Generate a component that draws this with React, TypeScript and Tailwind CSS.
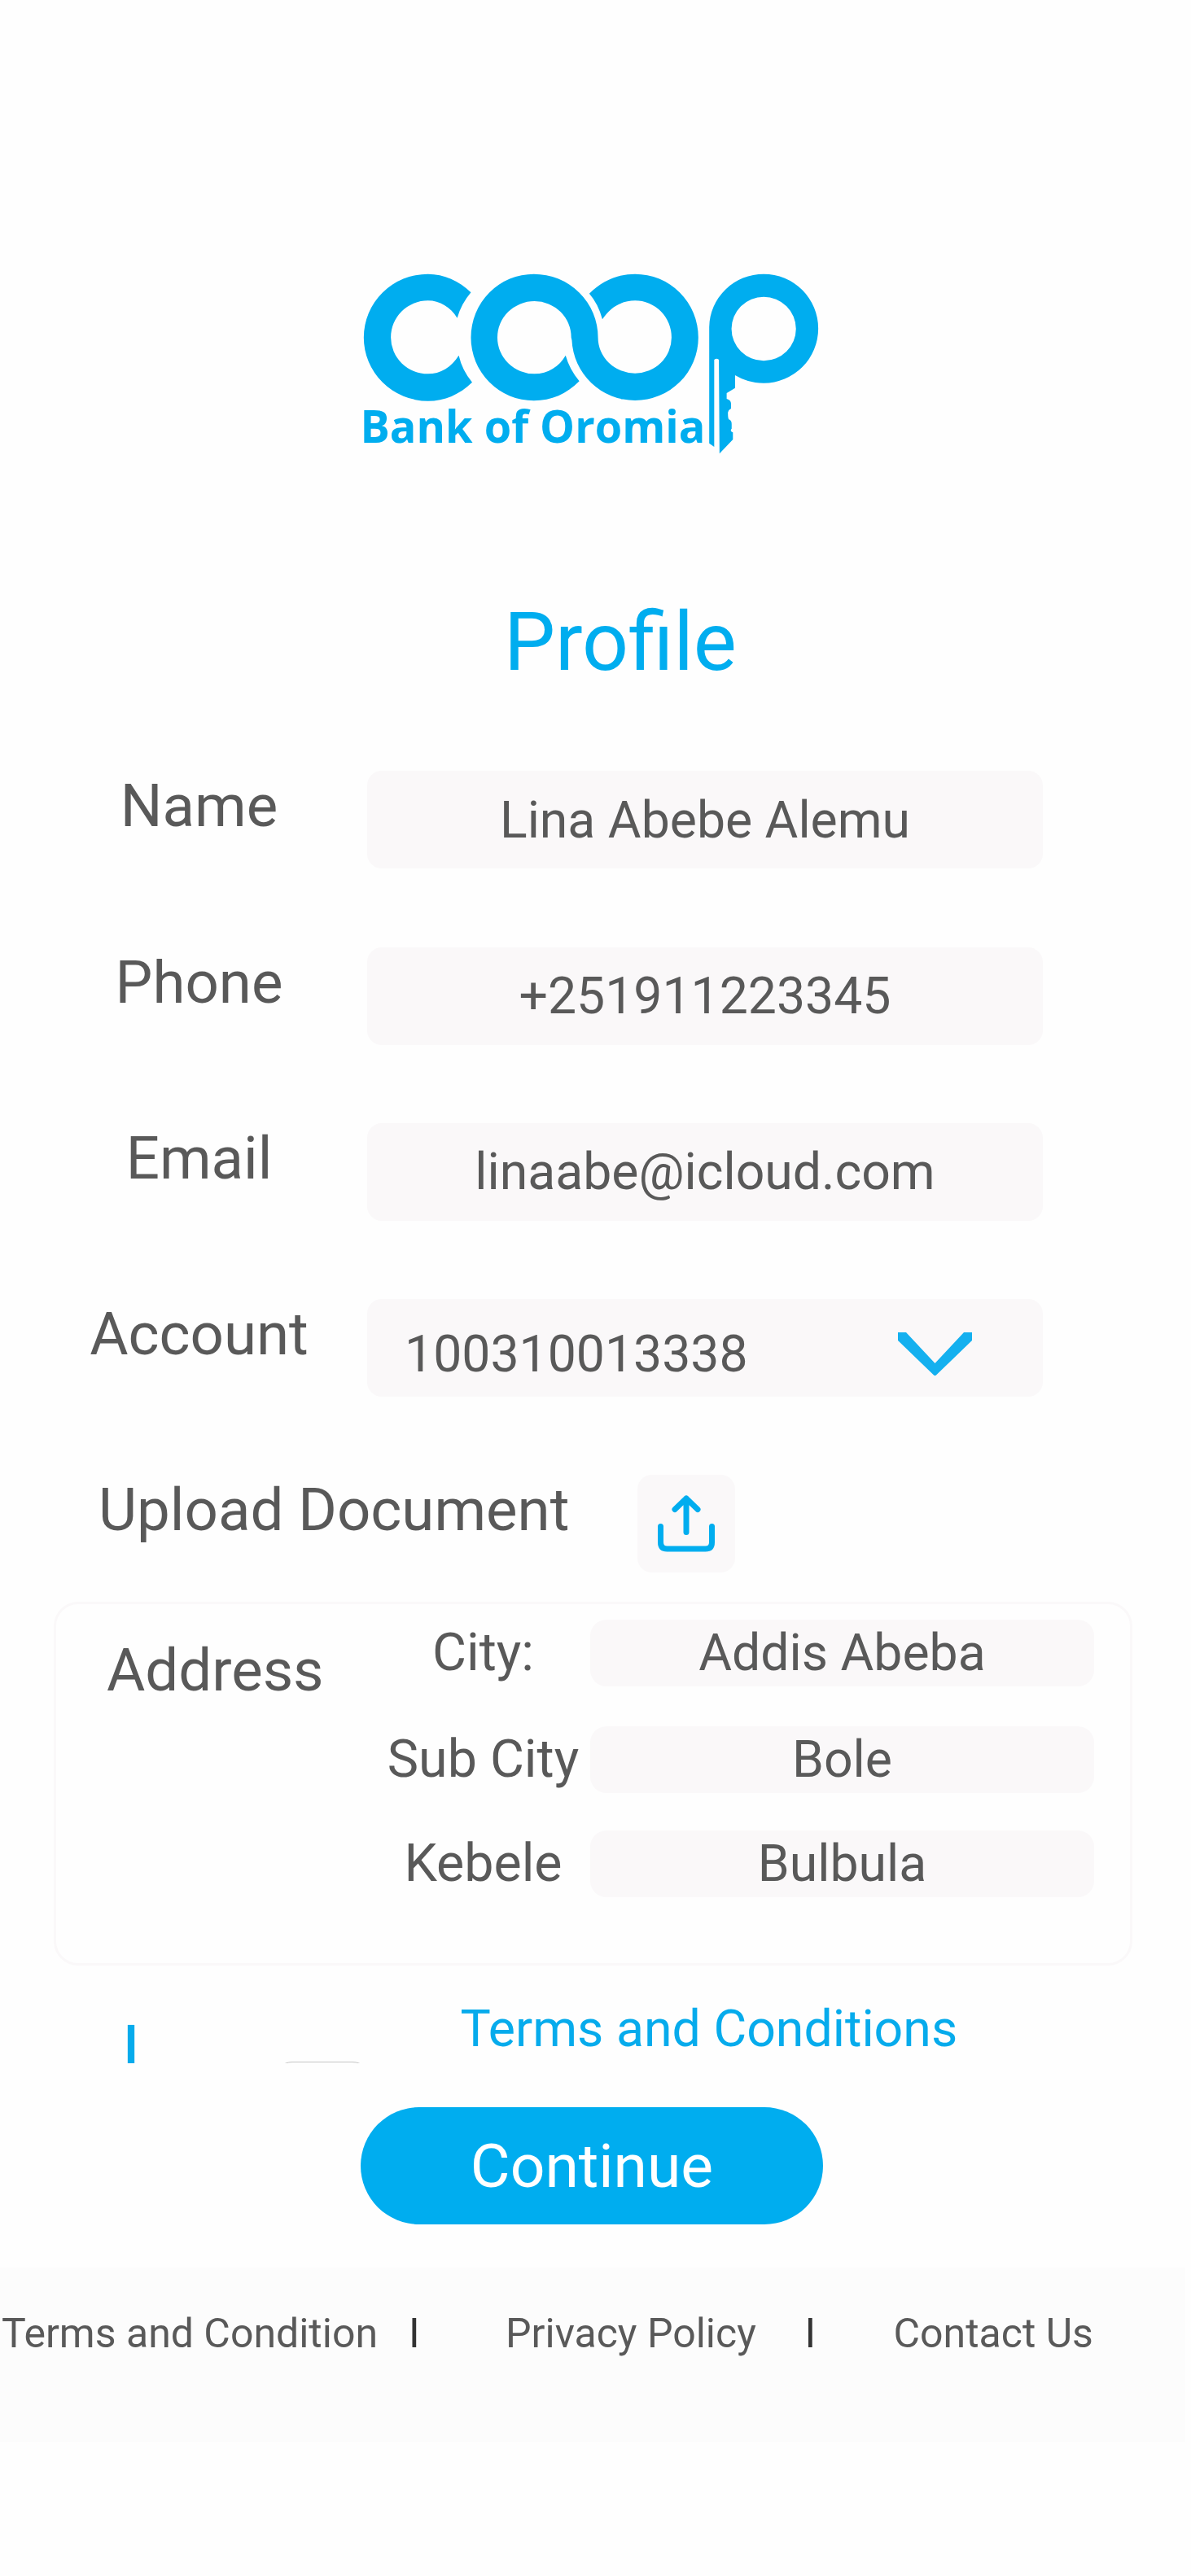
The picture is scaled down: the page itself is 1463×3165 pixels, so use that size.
import type { ReactNode } from "react";

function Logo() {
  return (
    <svg width="600" height="250" viewBox="0 0 600 250" className="ml-[430px] block text-[#00adef]" fill="currentColor">
      <g transform="scale(0.38265 0.33333)">
        <path d="M388 118C350 75 302 50 250 50A206 234 0 0 0 44 284A206 234 0 0 0 250 518C303 518 352 494 392 449Q360 405 349 350C326 393 290 418 250 418A119 134 0 0 1 131 283A119 135 0 0 1 250 148C288 148 322 172 344 212Q357 160 388 118Z" />
        <path d="M736 445C696 492 646 517 590 517A202 233 0 0 1 388 284A202 234 0 0 1 590 50A206 234 0 0 1 796 284A119 132 0 0 0 915 416A117 132 0 0 0 1032 284A117 136 0 0 0 915 148C872 148 835 172 810 217Q797 160 768 122C810 75 860 50 915 50A203 234 0 0 1 1118 284A203 232 0 0 1 915 516A203 232 0 0 1 712 294L710 284A118 134 0 0 0 592 150A119 134 0 0 0 473 284A119 134 0 0 0 592 418C636 418 672 390 692 350Q704 400 736 445Z" />
        <path
          fillRule="evenodd"
          d="M1153 245A175 198 0 0 1 1328 50A175 201 0 0 1 1503 251A175 201 0 0 1 1328 452C1290 452 1262 440 1236 423V470L1209 489V510Q1223 515 1223 528V546Q1214 551 1213 560Q1213 583 1216 586Q1225 590 1225 602V620Q1218 629 1229 634V660L1186 712L1184 366Q1177 358 1169 366V687L1153 674ZM1328 134A103.5 118 0 0 0 1328 370A103.5 118 0 0 0 1328 134Z"
        />
      </g>
      <text x="12.5" y="224" fontSize="55.6" fontWeight="700" textLength="424" lengthAdjust="spacingAndGlyphs" className="font-['Open_Sans',sans-serif]">
        Bank of Oromia
      </text>
    </svg>
  );
}

function UploadIcon() {
  return (
    <svg width="70" height="70" viewBox="0 0 70 70" fill="none" stroke="#00adef" strokeWidth="7" strokeLinecap="round" strokeLinejoin="round">
      <path d="M35 45.5V4M21 17.5L35 4L49 17.5" />
      <path d="M3.5 38.5V58Q3.5 66 11.5 66H58.5Q66.5 66 66.5 58V38.5" />
    </svg>
  );
}

function Chevron() {
  return (
    <svg width="91" height="54" viewBox="0 0 91 54" fill="#14b0ef">
      <path d="M0 0H10L45.5 38L81 0H91V10L47 52.5Q45.5 54 44 52.5L0 10Z" />
    </svg>
  );
}

function Field({ label, children }: { label: string; children: ReactNode }) {
  return (
    <div className="flex h-[120px]">
      <div className="mr-[37px] h-[87.5px] w-[339px] text-center text-[72.6px] leading-[88px]">{label}</div>
      <div className="flex h-[120px] w-[830px] items-center justify-center rounded-[18px] bg-[#faf8f9] text-[62.5px] leading-[75px]">
        {children}
      </div>
    </div>
  );
}

function AddressRow({ label, value }: { label: string; value: string }) {
  return (
    <div className="flex h-[82px] items-center leading-[75px]">
      <div className="mr-[2px] w-[259px] text-center text-[64.5px]">{label}</div>
      <div className="flex h-[82px] w-[619px] items-center justify-center rounded-[20px] bg-[#faf8f9] text-[62.5px]">{value}</div>
    </div>
  );
}

export default function App() {
  return (
    <div className="flex h-[3165px] w-[1463px] flex-col overflow-hidden bg-[#fefefe] pt-[320px] font-[Roboto,sans-serif] whitespace-nowrap text-[#595959]">
      <Logo />
      <h1 className="mt-[159px] ml-[619px] h-[120px] text-[100px] leading-[120px] text-[#00adef]">Profile</h1>

      <div className="mt-[98.25px] ml-[75px] flex flex-col gap-[96.25px]">
        <Field label="Name">Lina Abebe Alemu</Field>
        <Field label="Phone">+251911223345</Field>
        <Field label="Email">linaabe@icloud.com</Field>
        <Field label="Account">
          <span className="mr-auto ml-[46px] pt-[14px]">100310013338</span>
          <span className="mr-[87px] pt-[15px]">
            <Chevron />
          </span>
        </Field>
        <div className="flex h-[120px]">
          <div className="w-[661px] pl-[46px] text-[72.6px] leading-[88px]">Upload Document</div>
          <button className="ml-[47px] flex size-[120px] items-center justify-center rounded-[18px] bg-[#faf8f9]">
            <UploadIcon />
          </button>
        </div>
      </div>

      <section className="mt-[36px] ml-[66px] flex h-[446.5px] w-[1324.5px] rounded-[30px] border-[3px] border-[#faf8f9]">
        <div className="w-[395px] pt-[37px] pl-[62px] text-[72.6px] leading-[90px]">Address</div>
        <div className="mt-[18.7px] flex flex-col">
          <AddressRow label="City:" value="Addis Abeba" />
          <div className="h-[49px]" />
          <AddressRow label="Sub City" value="Bole" />
          <div className="h-[46px]" />
          <AddressRow label="Kebele" value="Bulbula" />
        </div>
      </section>

      <div className="flex h-[120.25px] items-start overflow-hidden text-[#06abec]">
        <div className="mt-[59px] ml-[149px] w-[188px] text-[88px] leading-[92px]">I</div>
        <div className="mt-[118.25px] h-[118px] w-[118px] shrink-0 rounded-[22px] border border-[#c4c4c4]" />
        <div className="mt-[40px] ml-[110.5px] text-[62.6px] leading-[75px]">Terms and Conditions</div>
      </div>

      <button className="mt-[53.5px] ml-[443px] flex h-[144.5px] w-[568px] items-center justify-center rounded-full bg-[#00adef] text-[75px] leading-[90px] text-white">
        Continue
      </button>

      <footer className="mt-[52.5px] flex h-[214px] w-[1456px] bg-[#fcfcfc] pt-[51px] text-[50px] leading-[60px]">
        <div className="w-[502px] pl-[2px]">Terms and Condition</div>
        <div className="w-[119px] text-[#333333]">I</div>
        <div className="w-[367.5px]">Privacy Policy</div>
        <div className="w-[109px] text-[#333333]">I</div>
        <div>Contact Us</div>
      </footer>
    </div>
  );
}
